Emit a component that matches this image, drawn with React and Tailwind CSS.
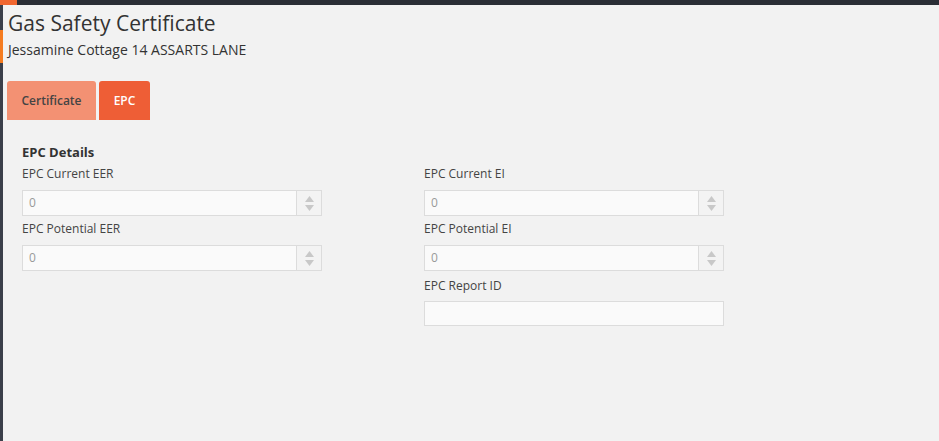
import { useState } from 'react';

function Spinner() {
  return (
    <div className="flex w-[25px] flex-col items-center justify-center gap-[3px] border-l border-[#dcdcdc] bg-[#f3f3f3]">
      <svg width="9" height="6" viewBox="0 0 9 6"><path d="M4.5 0 L9 6 L0 6 Z" fill="#c8c8c8" /></svg>
      <svg width="9" height="6" viewBox="0 0 9 6"><path d="M0 0 L9 0 L4.5 6 Z" fill="#c8c8c8" /></svg>
    </div>
  );
}

function NumberField({ label }) {
  return (
    <div>
      <div className="h-[17px] text-[12px] leading-[17px] text-[#444]">{label}</div>
      <div className="mt-[8px] flex h-[26px] w-[300px] border border-[#dcdcdc] bg-[#fafafa]">
        <div className="flex-1 pl-[6px] text-[12px] leading-[24px] text-[#999]">0</div>
        <Spinner />
      </div>
    </div>
  );
}

function TextField({ label }) {
  return (
    <div>
      <div className="h-[17px] text-[12px] leading-[17px] text-[#444]">{label}</div>
      <div className="mt-[7px] h-[25px] w-[300px] border border-[#dcdcdc] bg-[#fafafa]" />
    </div>
  );
}

export default function App() {
  const [tab, setTab] = useState('epc');

  return (
    <div className="flex h-[441px] w-[939px] flex-col overflow-hidden bg-[#f2f2f2]" style={{ fontFamily: '"Open Sans", sans-serif' }}>
      {/* top strip */}
      <div className="flex h-[5px] shrink-0 bg-[#2b2e36]">
        <div className="w-[17px] bg-[#f0662f]" />
      </div>
      <div className="flex flex-1">
        {/* left strip */}
        <div className="flex w-[3px] shrink-0 flex-col bg-[#3b3f4a]">
          <div className="h-[25px]" />
          <div className="h-[33px] bg-[#f57c20]" />
        </div>
        <div className="flex-1">
          <div className="pl-[5px] pt-[4px]">
            <h1 className="text-[21px] leading-[28px] text-[#333]">Gas Safety Certificate</h1>
            <div className="mt-[3px] text-[14px] leading-[20px] text-[#333]">Jessamine Cottage 14 ASSARTS LANE</div>
          </div>
          <div className="mt-[21px] flex gap-[3px] pl-[4px]">
            <button
              onClick={() => setTab('cert')}
              className="h-[39px] w-[89px] rounded-t-[3px] bg-[#f39173] text-[12px] font-semibold text-[#444]"
            >
              Certificate
            </button>
            <button
              onClick={() => setTab('epc')}
              className="h-[39px] w-[51px] rounded-t-[3px] bg-[#ee5e36] text-[12px] font-semibold text-white"
            >
              EPC
            </button>
          </div>
          <div className="pl-[19px] pt-[23px]">
            <div className="text-[13px] font-bold leading-[18px] text-[#333]">EPC Details</div>
            <div className="mt-[4px] grid grid-cols-[402px_402px] gap-y-[4px]">
              <NumberField label="EPC Current EER" />
              <NumberField label="EPC Current EI" />
              <NumberField label="EPC Potential EER" />
              <NumberField label="EPC Potential EI" />
              <div />
              <div className="mt-[2px]">
                <TextField label="EPC Report ID" />
              </div>
            </div>
          </div>
        </div>
      </div>
    </div>
  );
}
